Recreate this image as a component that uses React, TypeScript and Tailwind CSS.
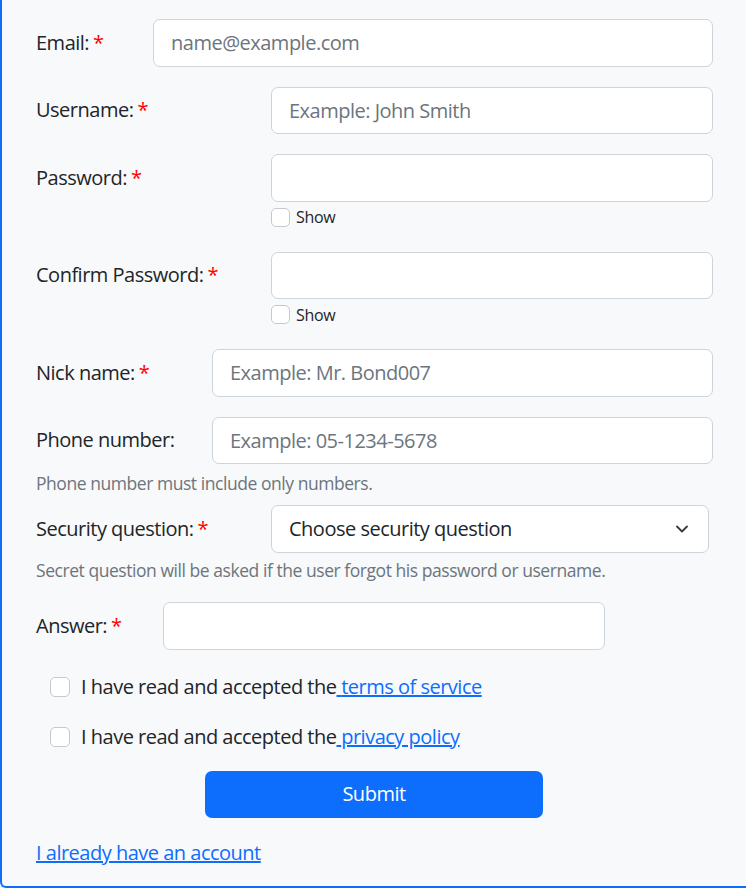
import { ChevronDown } from 'lucide-react';

const font = "font-['Open_Sans',_sans-serif]";

const Star = () => <span className="text-[#ff0000] ml-[4px]">*</span>;

interface RowProps {
  label: string;
  required?: boolean;
  labelWidth: string;
  children: React.ReactNode;
}

const Row = ({ label, required, labelWidth, children }: RowProps) => (
  <div className="flex items-start">
    <label className={`${labelWidth} h-[47.5px] flex items-center text-[#212529] shrink-0`}>
      {label}
      {required && <Star />}
    </label>
    <div className="flex flex-col">{children}</div>
  </div>
);

const inputCls =
  'h-[47.5px] rounded-[7px] border border-[#ced4da] bg-white px-[17px] text-[20px] tracking-[-0.5px] text-[#212529] placeholder:text-[#6c757d] outline-none';

const ShowBox = () => (
  <label className="flex items-center gap-[6px] mt-[6px] text-[16px] tracking-[-0.3px] text-[#212529] leading-none">
    <span className="w-[19px] h-[19px] rounded-[5px] border border-[#c4c9cf] bg-white" />
    Show
  </label>
);

const Terms = ({ text }: { text: string }) => (
  <div className="flex items-center pl-[14px]">
    <span className="w-[20px] h-[20px] rounded-[5px] border border-[#c4c9cf] bg-white shrink-0" />
    <span className="ml-[11px] text-[#212529]">
      I have read and accepted the
      <a href="#" className="text-[#0d6efd] underline">
        {' '}
        {text}
      </a>
    </span>
  </div>
);

export default function App() {
  return (
    <div className={`${font} w-[746px] h-[888px] bg-[#f8f9fa] text-[20px] tracking-[-0.5px] leading-[1.5]`}>
      <div className="h-full border-l-2 border-b-2 border-[#0d6efd] rounded-bl-[6px] pl-[34px] pt-[19px]">
        <Row label="Email:" required labelWidth="w-[117px]">
          <input className={`${inputCls} w-[560px]`} placeholder="name@example.com" />
        </Row>
        <div className="mt-[20px]">
          <Row label="Username:" required labelWidth="w-[235px]">
            <input className={`${inputCls} w-[442px]`} placeholder="Example: John Smith" />
          </Row>
        </div>
        <div className="mt-[20px]">
          <Row label="Password:" required labelWidth="w-[235px]">
            <input className={`${inputCls} w-[442px]`} type="password" />
            <ShowBox />
          </Row>
        </div>
        <div className="mt-[25px]">
          <Row label="Confirm Password:" required labelWidth="w-[235px]">
            <input className={`${inputCls} w-[442px]`} type="password" />
            <ShowBox />
          </Row>
        </div>
        <div className="mt-[25px]">
          <Row label="Nick name:" required labelWidth="w-[176px]">
            <input className={`${inputCls} w-[501px]`} placeholder="Example: Mr. Bond007" />
          </Row>
        </div>
        <div className="mt-[20px]">
          <Row label="Phone number:" labelWidth="w-[176px]">
            <input className={`${inputCls} w-[501px]`} placeholder="Example: 05-1234-5678" />
          </Row>
        </div>
        <p className="mt-[6px] text-[17.5px] tracking-[-0.45px] text-[#6c757d]">
          Phone number must include only numbers.
        </p>
        <div className="mt-[9px]">
          <Row label="Security question:" required labelWidth="w-[235px]">
            <div className={`${inputCls} w-[438px] flex items-center justify-between pr-[16px]`}>
              <span>Choose security question</span>
              <ChevronDown className="w-[20px] h-[20px] text-[#343a40]" strokeWidth={2.2} />
            </div>
          </Row>
        </div>
        <p className="mt-[4px] text-[17.5px] tracking-[-0.45px] text-[#6c757d]">
          Secret question will be asked if the user forgot his password or username.
        </p>
        <div className="mt-[19px]">
          <Row label="Answer:" required labelWidth="w-[127px]">
            <input className={`${inputCls} w-[442px]`} />
          </Row>
        </div>
        <div className="mt-[22px] flex flex-col gap-[20px]">
          <Terms text="terms of service" />
          <Terms text="privacy policy" />
        </div>
        <div className="mt-[19px] flex justify-center pr-[34px]">
          <button className="w-[338px] h-[47.5px] rounded-[7px] bg-[#0d6efd] text-white text-[20px] tracking-[-0.5px]">
            Submit
          </button>
        </div>
        <a href="#" className="block mt-[20px] text-[#0d6efd] underline w-fit">
          I already have an account
        </a>
      </div>
    </div>
  );
}
